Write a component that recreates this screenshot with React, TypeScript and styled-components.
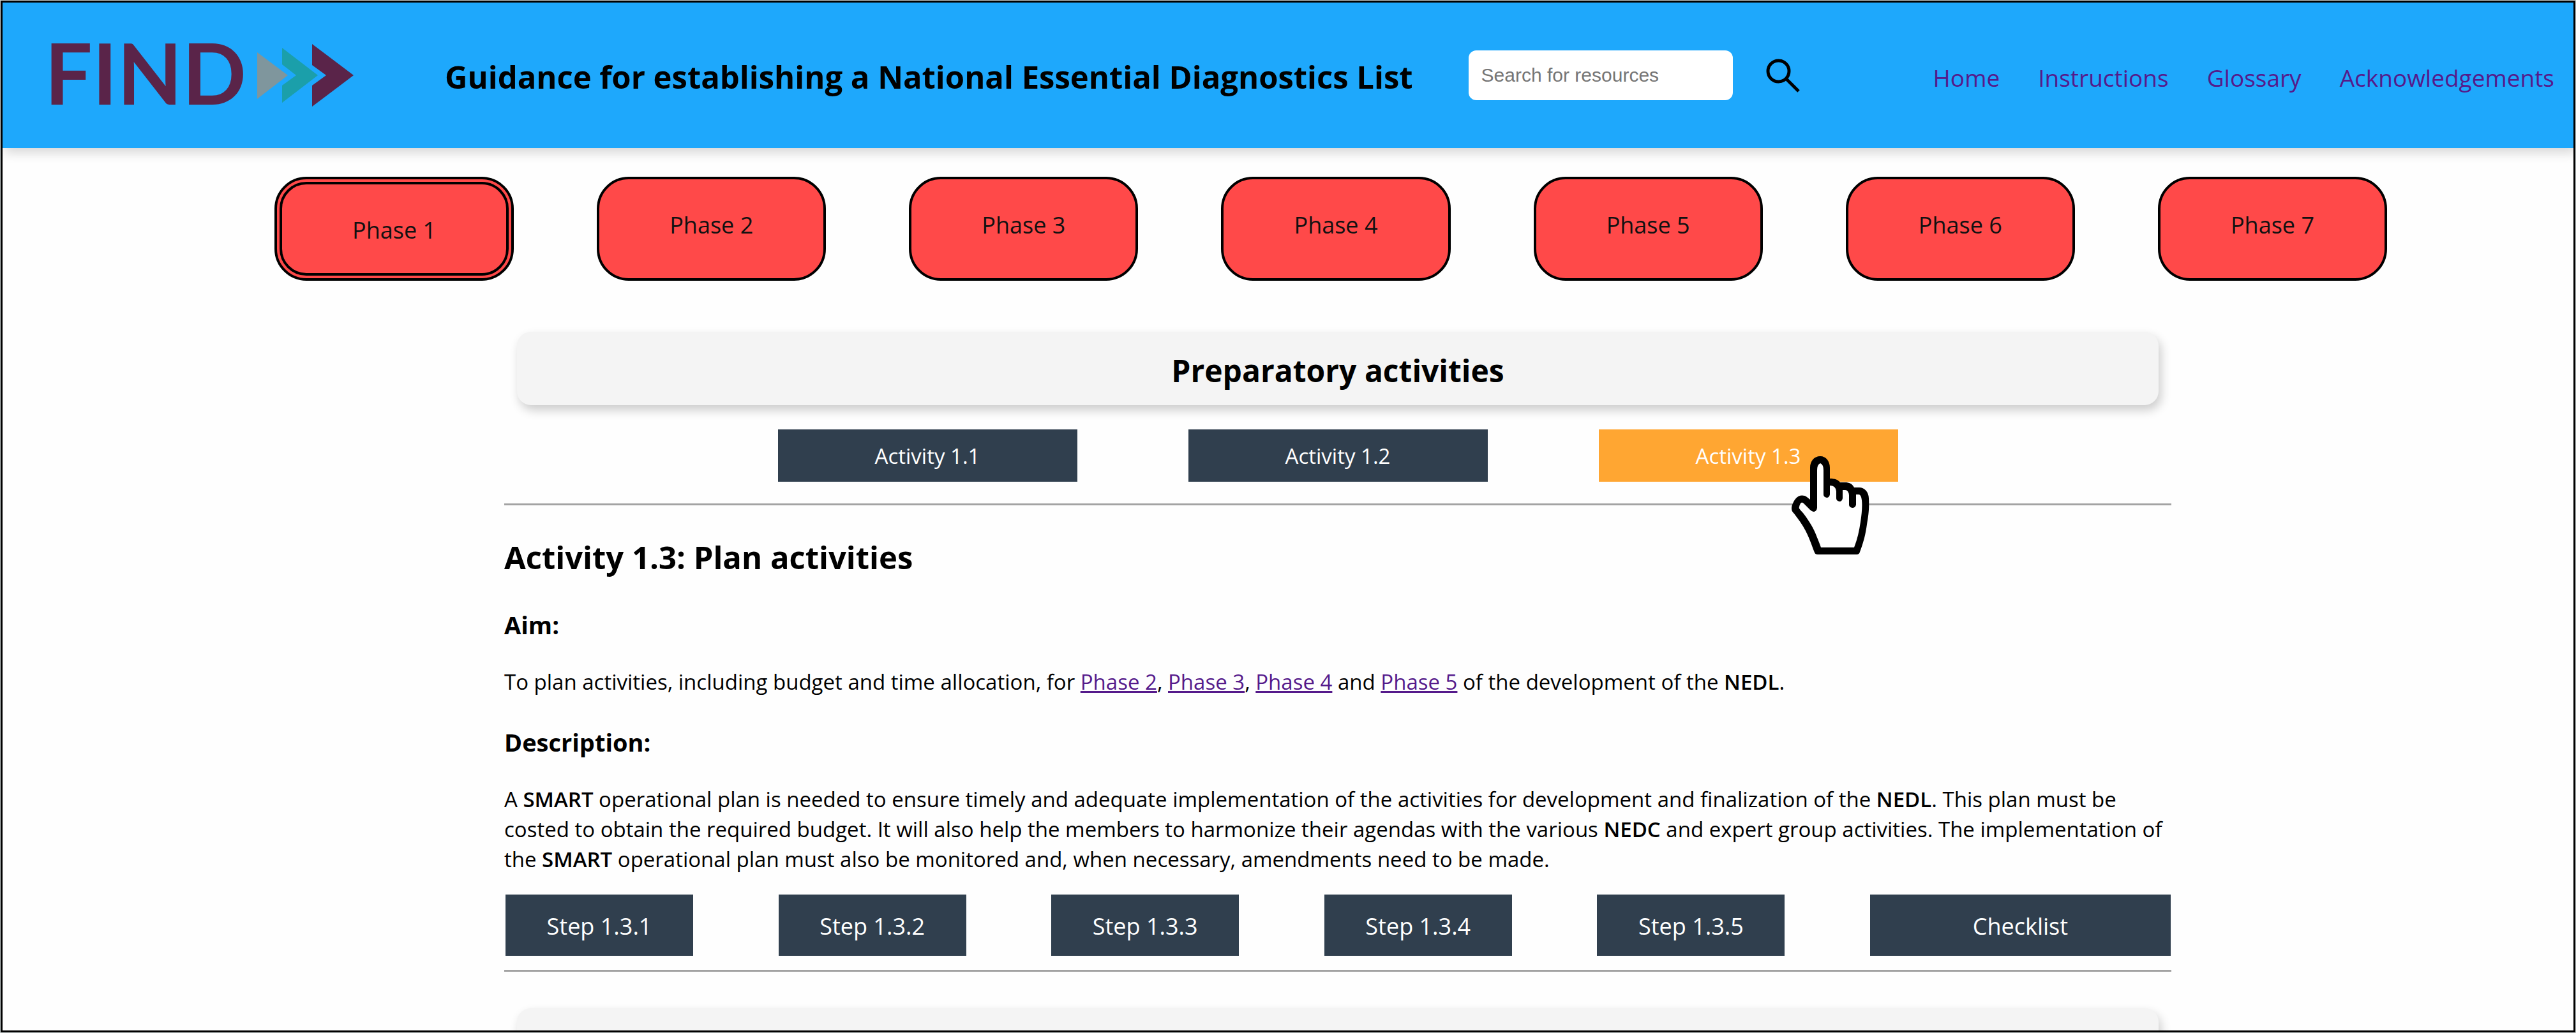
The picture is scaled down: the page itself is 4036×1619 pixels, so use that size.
import React from "react";
import styled, { createGlobalStyle, css } from "styled-components";

const GlobalStyle = createGlobalStyle`
  *, *::before, *::after { box-sizing: border-box; }
  body {
    margin: 0;
    background: #c4caca;
    color: #000;
    font-family: "Open Sans", "Noto Sans", sans-serif;
  }
  h1, h2, h3, p { margin: 0; }
`;

const visited = "#551a8b";
const slate = "#303f4e";
const amber = "#ffa632";

const Screen = styled.div`
  height: 100vh;
  padding: 1px;
`;

const Frame = styled.div`
  height: 100%;
  overflow: hidden;
  border: 3px solid #000;
  background: #fefefe;
`;

const Header = styled.header`
  display: flex;
  align-items: center;
  min-height: 228px;
  padding: 0 30px 0 66px;
  background: #1ea8fc;
  box-shadow: 4px 8px 16px rgba(0, 0, 0, 0.15);
`;

const Logo = styled.svg`
  flex: none;
  width: 484px;
  height: 98px;
  overflow: visible;
  font-family: Lato, sans-serif;
  font-weight: 700;
`;

const SiteTitle = styled.h1`
  margin-left: 143px;
  padding-top: 4px;
  font-size: 49px;
  line-height: 68px;
  white-space: nowrap;
`;

const SearchForm = styled.form`
  display: flex;
  align-items: center;
  gap: 52px;
  margin-left: 87px;
`;

const SearchInput = styled.input`
  width: 414px;
  height: 78px;
  padding: 0 20px;
  border: 0;
  border-radius: 12px;
  background: #fff;
  font-family: "Liberation Sans", Arial, sans-serif;
  font-size: 30px;

  &::placeholder {
    color: #757575;
    opacity: 1;
  }
`;

const SearchButton = styled.button`
  display: flex;
  padding: 0;
  border: 0;
  background: none;
  cursor: pointer;
`;

const SiteNav = styled.nav`
  display: flex;
  gap: 60px;
  margin-left: auto;
  padding-top: 8px;
`;

const NavLink = styled.a`
  color: ${visited};
  font-size: 37px;
  line-height: 48px;
  text-decoration: none;
`;

const PhaseNav = styled.nav`
  display: flex;
  justify-content: space-between;
  padding: 45px 292px 80px 426px;
`;

const PhaseLink = styled.a<{ $current?: boolean }>`
  padding: 48px 110px 43px;
  border: ${(p) => (p.$current ? "12px double #000" : "4px solid #000")};
  border-radius: 50px;
  background: #ff4949;
  color: #111;
  font-size: 36px;
  line-height: 48px;
  text-decoration: none;
  white-space: nowrap;
`;

const Main = styled.main`
  padding: 0 630px 0 786px;
`;

const SectionBar = styled.div`
  min-height: 115px;
  margin: 0 20px;
  padding: 31px 24px 24px;
  border-radius: 22px;
  background: #f4f4f4;
  box-shadow: 4px 8px 16px rgba(0, 0, 0, 0.2);
  text-align: center;
`;

const SectionTitle = styled.h2`
  font-size: 48px;
  line-height: 60px;
`;

const blockButton = css`
  border: 0;
  color: #fff;
  font-family: inherit;
  line-height: 48px;
  text-align: center;
  cursor: pointer;
`;

const ActivityRow = styled.div`
  display: flex;
  justify-content: center;
  gap: 174px;
  margin-top: 38px;
`;

const ActivityButton = styled.button<{ $active?: boolean }>`
  ${blockButton}
  position: relative;
  width: 469px;
  padding: 18px 0 16px;
  background: ${(p) => (p.$active ? amber : slate)};
  font-size: 33px;
`;

const HandPointer = styled.svg`
  position: absolute;
  left: 302px;
  top: 42px;
  width: 122px;
  height: 154px;
  pointer-events: none;
`;

const Rule = styled.hr<{ $gap: number }>`
  margin: ${(p) => p.$gap}px 0 0;
  border: 0;
  border-top: 3px solid #a3a3a3;
`;

const ActivityTitle = styled.h2`
  margin-top: 46px;
  font-size: 49px;
  line-height: 70px;
`;

const SubTitle = styled.h3`
  margin-top: 45px;
  font-size: 38px;
  line-height: 52px;
`;

const Paragraph = styled.p`
  margin-top: 40px;
  font-size: 33px;
  line-height: 47px;

  a { color: ${visited}; }
  strong { font-weight: 600; }
`;

const StepRow = styled.div`
  display: flex;
  justify-content: space-between;
  margin-top: 32px;
  padding: 0 1px 0 2px;
`;

const StepButton = styled.button<{ $wide?: boolean }>`
  ${blockButton}
  width: ${(p) => (p.$wide ? 471 : 294)}px;
  padding: 26px 0 22px;
  background: ${slate};
  font-size: 36px;
`;

const NextSection = styled.section`
  margin-top: 57px;
`;

function FindLogo() {
  return (
    <Logo viewBox="0 0 484 98" role="img" aria-label="FIND">
      <text x="0" y="95" fontSize="132" fill="#5a2449">FIND</text>
      <path d="M333 13 L381 49 L333 86 Z" fill="#7f969d" />
      <path d="M372 6 L428 49 L372 92 V65 L394 49 L372 32 Z" fill="#1b9faa" />
      <path d="M419 0 L484 49 L419 98 V65 L441 49 L419 33 Z" fill="#5a2449" />
    </Logo>
  );
}

function SearchIcon() {
  return (
    <svg width="53" height="53" viewBox="0 0 53 53" fill="none" stroke="#000" strokeWidth="5" aria-hidden="true">
      <circle cx="19.5" cy="19.5" r="16.5" />
      <path d="M31 31 L51 51" />
    </svg>
  );
}

function Hand() {
  return (
    <HandPointer viewBox="0 0 122 154" aria-hidden="true">
      <path
        fill="#000"
        d="M45 0 C35 0 29 8 29 18 V68 L24 64 C18 60 11 61 6 67 C3 71 0 77 0 82 C0 86 2 88 4 90 C10 98 17 107 22 117 C29 131 32 141 36 151 Q37 154 41 154 H102 Q106 154 107 150 C113 134 116 122 118 107 C120 95 122 84 121 66 C121 56 114 49 106 49 H98 C95 43 90 41 84 41 H76 C73 37 68 35 60 35 V18 C60 8 54 0 45 0 Z"
      />
      <path
        fill="#fff"
        d="M45 11 Q40 13 40 22 V81 Q39 87 34 87 Q31 86 29 84 L19 74 Q16 71 14 74 Q11 79 12 82 Q14 85 18 89 C25 98 33 110 37 120 C41 130 44 137 46 143 H98 C103 130 106 117 108 103 C110 90 111 78 110 69 Q109 60 105 60 H101 V76 Q100 81 95 81 Q90 80 90 76 V61 Q89 53 84 53 H80 V66 Q79 71 75 71 Q70 70 70 66 V55 Q69 46 60 46 V60 Q59 65 55 65 Q50 64 50 60 V22 Q50 13 45 11 Z"
      />
    </HandPointer>
  );
}

const phases = [1, 2, 3, 4, 5, 6, 7];
const navItems = ["Home", "Instructions", "Glossary", "Acknowledgements"];
const activities = ["1.1", "1.2", "1.3"];
const steps = ["1.3.1", "1.3.2", "1.3.3", "1.3.4", "1.3.5"];

export default function App() {
  return (
    <Screen>
      <GlobalStyle />
      <Frame>
        <Header>
          <FindLogo />
          <SiteTitle>Guidance for establishing a National Essential Diagnostics List</SiteTitle>
          <SearchForm role="search" onSubmit={(e) => e.preventDefault()}>
            <SearchInput type="text" placeholder="Search for resources" aria-label="Search for resources" />
            <SearchButton type="submit" aria-label="Search">
              <SearchIcon />
            </SearchButton>
          </SearchForm>
          <SiteNav>
            {navItems.map((item) => (
              <NavLink key={item} href={`#${item.toLowerCase()}`}>{item}</NavLink>
            ))}
          </SiteNav>
        </Header>

        <PhaseNav>
          {phases.map((n) => (
            <PhaseLink key={n} href={`#phase-${n}`} $current={n === 1}>Phase {n}</PhaseLink>
          ))}
        </PhaseNav>

        <Main>
          <SectionBar>
            <SectionTitle>Preparatory activities</SectionTitle>
          </SectionBar>

          <ActivityRow>
            {activities.map((id) => (
              <ActivityButton key={id} type="button" $active={id === "1.3"}>
                Activity {id}
                {id === "1.3" && <Hand />}
              </ActivityButton>
            ))}
          </ActivityRow>
          <Rule $gap={34} />

          <ActivityTitle>Activity 1.3: Plan activities</ActivityTitle>
          <SubTitle>Aim:</SubTitle>
          <Paragraph>
            To plan activities, including budget and time allocation, for <a href="#phase-2">Phase 2</a>,{" "}
            <a href="#phase-3">Phase 3</a>, <a href="#phase-4">Phase 4</a> and <a href="#phase-5">Phase 5</a> of the
            development of the <strong>NEDL</strong>.
          </Paragraph>
          <SubTitle>Description:</SubTitle>
          <Paragraph>
            A <strong>SMART</strong> operational plan is needed to ensure timely and adequate implementation of the
            activities for development and finalization of the <strong>NEDL</strong>. This plan must be costed to obtain
            the required budget. It will also help the members to harmonize their agendas with the various{" "}
            <strong>NEDC</strong> and expert group activities. The implementation of the <strong>SMART</strong>{" "}
            operational plan must also be monitored and, when necessary, amendments need to be made.
          </Paragraph>

          <StepRow>
            {steps.map((id) => (
              <StepButton key={id} type="button">Step {id}</StepButton>
            ))}
            <StepButton type="button" $wide>Checklist</StepButton>
          </StepRow>
          <Rule $gap={22} />

          <NextSection>
            <SectionBar />
          </NextSection>
        </Main>
      </Frame>
    </Screen>
  );
}
